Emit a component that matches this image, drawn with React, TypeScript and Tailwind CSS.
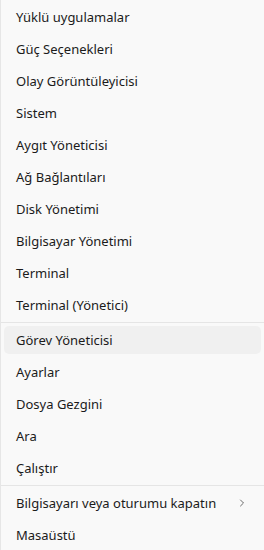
import { ChevronRight } from 'lucide-react'

type Item = { label: string; active?: boolean; sub?: boolean }

const groups: Item[][] = [
  [
    { label: 'Yüklü uygulamalar' },
    { label: 'Güç Seçenekleri' },
    { label: 'Olay Görüntüleyicisi' },
    { label: 'Sistem' },
    { label: 'Aygıt Yöneticisi' },
    { label: 'Ağ Bağlantıları' },
    { label: 'Disk Yönetimi' },
    { label: 'Bilgisayar Yönetimi' },
    { label: 'Terminal' },
    { label: 'Terminal (Yönetici)' },
  ],
  [
    { label: 'Görev Yöneticisi', active: true },
    { label: 'Ayarlar' },
    { label: 'Dosya Gezgini' },
    { label: 'Ara' },
    { label: 'Çalıştır' },
  ],
  [
    { label: 'Bilgisayarı veya oturumu kapatın', sub: true },
    { label: 'Masaüstü' },
  ],
]

export default function App() {
  return (
    <div
      className="w-[264px] h-[550px] overflow-hidden bg-[#f9f9f9] border-l border-[#e6e6e6] pt-px text-[13px] text-[#1b1b1b]"
      style={{ fontFamily: '"Noto Sans", sans-serif' }}
    >
      {groups.map((items, gi) => (
        <div key={gi}>
          {gi > 0 && <div className="my-px h-px bg-[#e5e5e5]" />}
          {items.map(item => (
            <div key={item.label} className="h-8 px-[3px] py-[2px]">
              <div
                className={`h-full flex items-center pl-3 pr-[13px] rounded-[5px] ${item.active ? 'bg-[#f0f0f0]' : ''}`}
              >
                <span className="flex-1 leading-none">{item.label}</span>
                {item.sub && <ChevronRight size={12} strokeWidth={1.5} className="text-[#3c3c3c]" />}
              </div>
            </div>
          ))}
        </div>
      ))}
    </div>
  )
}
